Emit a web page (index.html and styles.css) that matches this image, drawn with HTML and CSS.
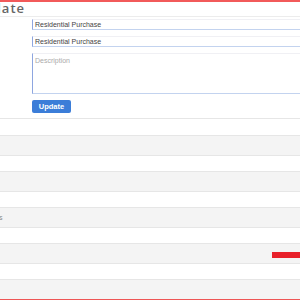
FILE: index.html
```html
<!DOCTYPE html>
<html>
<head>
<meta charset="utf-8">
<link rel="stylesheet" href="styles.css">
</head>
<body>
<div class="top-bar"></div>
<header class="header"><h1 class="title">Update</h1></header>
<form class="form">
  <input class="field" type="text" value="Residential Purchase">
  <input class="field" type="text" value="Residential Purchase">
  <textarea class="field area" placeholder="Description"></textarea>
  <div class="actions"><button class="btn" type="button">Update</button></div>
</form>
<div class="table">
  <div class="row row-white first"></div>
  <div class="row row-gray"></div>
  <div class="row row-white"></div>
  <div class="row row-gray"></div>
  <div class="row row-white"></div>
  <div class="row row-gray"><span class="label">Documents</span></div>
  <div class="row row-white"></div>
  <div class="row row-gray"><span class="bar"></span></div>
  <div class="row row-white"></div>
  <div class="row row-gray"></div>
</div>
<div class="bottom-bar"></div>
</body>
</html>
```
FILE: styles.css
```css
* { box-sizing: border-box; }
html, body { margin: 0; padding: 0; }
body {
  width: 300px;
  height: 300px;
  overflow: hidden;
  background: #fff;
  font-family: "Liberation Sans", Arial, sans-serif;
}
.top-bar { height: 2px; background: #f25a5a; }
.header {
  height: 15px;
  border-bottom: 1px solid #ececec;
  overflow: hidden;
}
.title {
  margin: 0 0 0 -27px;
  font-family: "Open Sans", sans-serif;
  font-size: 13px;
  line-height: 13px;
  font-weight: 600;
  letter-spacing: 1px;
  color: #666;
  white-space: nowrap;
}
.form {
  display: flex;
  flex-direction: column;
  gap: 6px;
  padding: 2px 0 5px 32px;
  margin: 0;
}
.field {
  display: block;
  width: 280px;
  height: 11px;
  margin: 0;
  padding: 0 0 0 2px;
  border: 0;
  border-top: 1px solid #f0f0f4;
  border-left: 1px solid #8ea6e0;
  border-bottom: 1px solid #c3d3ef;
  font-family: "Liberation Sans", Arial, sans-serif;
  font-size: 7px;
  color: #444;
  background: #fff;
  outline: none;
}
.area {
  height: 41px;
  resize: none;
  padding-top: 3px;
}
.area::placeholder { color: #aaa; }
.actions { display: flex; }
.btn {
  width: 39px;
  height: 13px;
  padding: 0;
  border: 0;
  border-radius: 2px;
  background: #3b7dd8;
  color: #fff;
  font-family: "Liberation Sans", Arial, sans-serif;
  font-size: 7.5px;
  font-weight: bold;
}
.table { display: flex; flex-direction: column; }
.row {
  border-top: 1px solid #e6e6e6;
  display: flex;
  overflow: hidden;
}
.row-white { height: 16px; background: #fff; }
.row-white.first { height: 17px; }
.row-gray { height: 20px; background: #f4f4f4; }
.label {
  margin: 6px 0 0 -33px;
  font-size: 7px;
  line-height: 8px;
  color: #888;
  white-space: nowrap;
}
.bar {
  margin: 8px -2px 0 auto;
  width: 30px;
  height: 6px;
  background: #e8202a;
}
.bottom-bar { height: 3px; background: #ee5555; }
```
